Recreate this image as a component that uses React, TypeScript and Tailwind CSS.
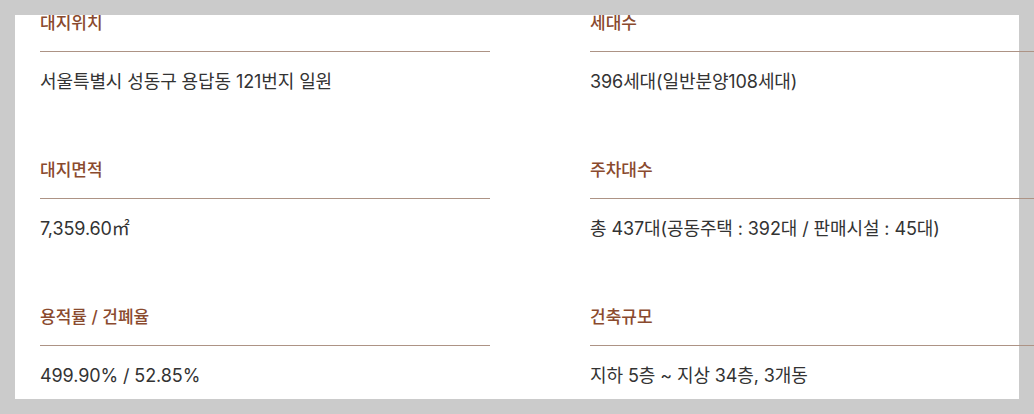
const items = [
  { label: '대지위치', value: '서울특별시 성동구 용답동 121번지 일원' },
  { label: '세대수', value: '396세대(일반분양108세대)' },
  { label: '대지면적', value: '7,359.60㎡' },
  { label: '주차대수', value: '총 437대(공동주택 : 392대 / 판매시설 : 45대)' },
  { label: '용적률 / 건폐율', value: '499.90% / 52.85%' },
  { label: '건축규모', value: '지하 5층 ~ 지상 34층, 3개동' },
];

export default function App() {
  return (
    <div className="h-[414px] w-full bg-[#cbcbcb] p-[15px] overflow-hidden font-['Inter','Noto_Sans_CJK_KR',sans-serif]">
      <div className="flow-root h-full bg-white [clip-path:inset(0_-40px_0_0)]">
        <div className="grid grid-cols-[450px_450px] gap-x-[100px] pl-[25px] mt-[-4px]">
          {items.map((item) => (
            <div key={item.label} className="mb-[64px]">
              <div className="border-b border-[#ad9385] pb-[16px] text-[17px] leading-[24px] font-medium text-[#8a4a2e]">
                {item.label}
              </div>
              <div className="pt-[18px] text-[18px] leading-[24px] tracking-[-0.1px] text-[#333333]">
                {item.value}
              </div>
            </div>
          ))}
        </div>
      </div>
    </div>
  );
}
